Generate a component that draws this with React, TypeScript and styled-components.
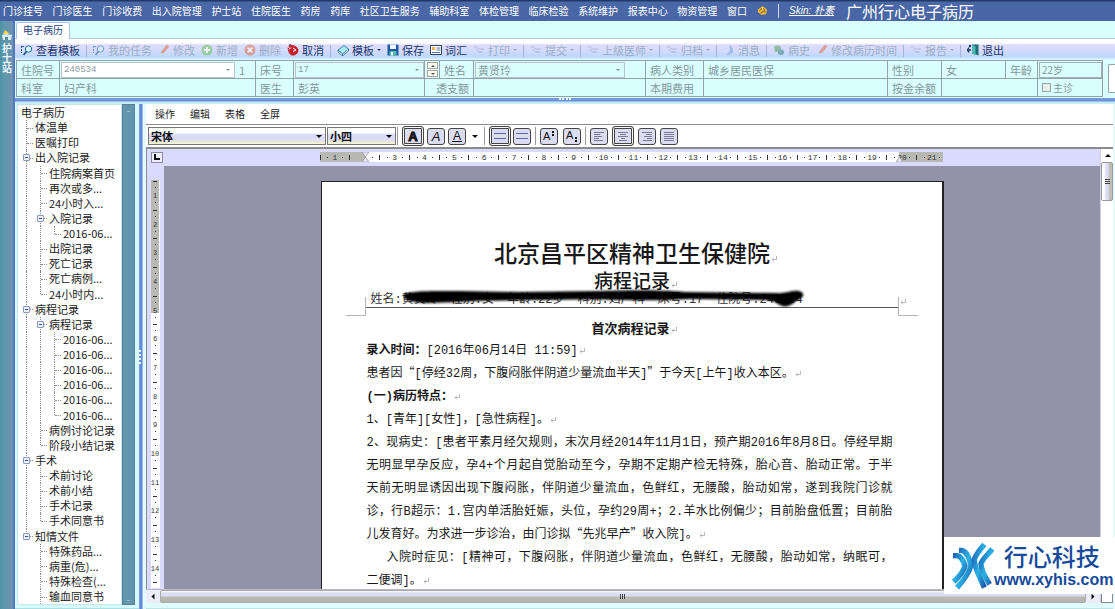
import React from "react";
import styled, { createGlobalStyle, css } from "styled-components";

const sans = `"Noto Sans CJK SC", "Noto Sans", sans-serif`;
const mono = `"Liberation Mono", "Noto Sans CJK SC", monospace`;

const GlobalStyle = createGlobalStyle`
  *, *::before, *::after { box-sizing: border-box; }
  html, body { margin: 0; padding: 0; height: 100%; }
  body { font-family: ${sans}; font-size: 11px; background: #d9fffe; overflow: hidden; }
  button, input, select { font-family: inherit; margin: 0; padding: 0; border-radius: 0; }
  button { border: 0; background: none; color: inherit; font-size: inherit; line-height: inherit; white-space: nowrap; }
`;

/* ---------- shell ---------- */

const Shell = styled.div`
  position: relative;
  height: 100vh;
  display: flex;
  flex-direction: column;
  overflow: hidden;
`;

const MenuBar = styled.header`
  flex: none;
  height: 21px;
  display: flex;
  align-items: center;
  background: linear-gradient(#1f3a68 0, #1f3a68 1px, #4a67a6 2px, #4866a5 100%);
  color: #fff;
`;

const MainNav = styled.nav`
  flex: 0 0 67%;
  padding-left: 3px;
  display: flex;
  justify-content: space-between;
`;

const MenuButton = styled.button`
  font-size: 10px;
  line-height: 18px;
`;

const SkinArea = styled.div`
  display: flex;
  align-items: center;
  padding-left: 10px;
`;

const BarDivider = styled.span`
  width: 1px;
  height: 14px;
  margin: 0 10px;
  background: #c8d4ea;
`;

const SkinLink = styled.a`
  color: #fff;
  font: italic 10px/14px "Liberation Sans", ${sans};
`;

const AppTitle = styled.h1`
  margin: 0 0 0 12px;
  font-size: 16px;
  line-height: 20px;
  font-weight: 400;
  white-space: nowrap;
`;

const Body = styled.div`
  flex: 1;
  min-height: 0;
  display: flex;
`;

const SideStrip = styled.aside`
  flex: none;
  width: 15px;
  padding-top: 8px;
  display: flex;
  flex-direction: column;
  align-items: center;
  gap: 2px;
  overflow: hidden;
  background: linear-gradient(90deg, #4a93a4 0, #5b97ad 3px, #6f93ae 12px);
  border-right: 2px solid #4f78c4;
  color: #e9f6fb;
`;

const StripButton = styled.button`
  font-size: 10px;
  line-height: 12px;
  writing-mode: vertical-rl;
  font-weight: 700;
`;

const Work = styled.div`
  flex: 1;
  min-width: 0;
  display: flex;
  flex-direction: column;
`;

const TabRow = styled.div`
  flex: none;
  height: 18px;
  padding-left: 1px;
  display: flex;
  align-items: flex-end;
  background: #d9fffe;
  border-bottom: 1px solid #b5cfe0;
`;

const Tab = styled.button`
  width: 54px;
  height: 17px;
  margin-bottom: -1px;
  padding-bottom: 2px;
  background: #fff;
  border: 1px solid #a9c4dc;
  border-bottom: 0;
  border-radius: 2px 2px 0 0;
  color: #243c78;
  font-size: 10px;
  line-height: 14px;
`;

/* ---------- command bar ---------- */

const CommandBar = styled.div`
  flex: none;
  height: 21px;
  padding-left: 3px;
  display: flex;
  align-items: center;
  background: linear-gradient(#fff 0, #fff 4px, #dcdcfb 6px, #d6dbfb 11px, #bcd8fb 18px, #e6fbff 21px);
`;

const Command = styled.button<{ $muted?: boolean }>`
  display: flex;
  align-items: center;
  gap: 3px;
  padding: 0 3px;
  line-height: 16px;
  color: ${(p) => (p.$muted ? "#9badc6" : "#22386f")};
  svg { flex: none; opacity: ${(p) => (p.$muted ? 0.55 : 1)}; }
`;

const Divider = styled.span`
  flex: none;
  width: 1px;
  height: 12px;
  margin: 2px 3px 0;
  background: #a3b4d8;
`;

const Caret = styled.span<{ $size?: number }>`
  display: inline-block;
  border: ${(p) => p.$size ?? 2}px solid transparent;
  border-top-color: currentColor;
  border-bottom-width: 0;
`;

/* ---------- patient form ---------- */

const FormRow = styled.div`
  flex: none;
  display: flex;
  background: #d9fffe;
  padding: 0 0 0 1px;
`;

const InfoTable = styled.table`
  flex: 1;
  table-layout: fixed;
  width: 100%;
  border-collapse: collapse;
  color: #86969b;
  td, th {
    height: 18px;
    padding: 0 4px;
    border: 1px solid #93a3ac;
    font-weight: 400;
    font-size: 11px;
    line-height: 16px;
    text-align: left;
    white-space: nowrap;
  }
  td.flush { padding: 0 0 0 1px; }
`;

const FieldFlex = styled.div`
  display: flex;
  align-items: center;
`;

const Combo = styled.label<{ $white?: boolean; $width?: string }>`
  flex: ${(p) => (p.$width ? `0 0 ${p.$width}` : "1")};
  position: relative;
  display: flex;
  align-items: center;
  height: 16px;
  border: 1px solid #b7c3c9;
  background: ${(p) => (p.$white ? "#fff" : "transparent")};
  &::after {
    content: "";
    position: absolute;
    right: 4px;
    border: 2px solid transparent;
    border-top-color: #7d8d94;
    border-bottom-width: 0;
  }
`;

const ComboInput = styled.input`
  width: 100%;
  border: 0;
  padding-left: 2px;
  background: transparent;
  color: #8d9a9c;
  font: 9px/14px ${mono};
  &.wide { font: 11px/14px ${sans}; }
`;

const AgeInput = styled.input`
  display: block;
  width: 100%;
  height: 16px;
  border: 1px solid #a3b0b6;
  padding-left: 2px;
  background: transparent;
  color: #8d9a9c;
  font: 10px/14px ${sans};
`;

const Suffix = styled.span`
  padding-left: 4px;
`;

const Spinner = styled.div`
  display: flex;
  flex-direction: column;
  align-items: center;
  gap: 1px;
`;

const SpinButton = styled.button<{ $up?: boolean }>`
  width: 11px;
  height: 7px;
  border: 1px solid #a9a49c;
  background: #fbf6ee;
  display: flex;
  align-items: center;
  justify-content: center;
  color: #555;
  ${Caret} { transform: ${(p) => (p.$up ? "rotate(180deg)" : "none")}; }
`;

const CheckLabel = styled.label`
  display: flex;
  align-items: center;
  gap: 2px;
  font-size: 10px;
  input {
    appearance: none;
    width: 9px;
    height: 9px;
    border: 1px solid #9aa5a8;
    background: #e6eeee;
  }
`;

const EdgeBox = styled.div`
  flex: none;
  width: 7px;
  margin: 4px 0 4px 5px;
  background: #fff;
  border: 1px solid #93a3ac;
  border-right: 0;
  border-radius: 2px 0 0 2px;
`;

const HSplitter = styled.div`
  flex: none;
  height: 7px;
  padding-top: 1px;
  display: flex;
  justify-content: center;
  background: linear-gradient(#d9fffe 0, #d9fffe 1px, #7d9ddb 1px, #6a8fd6 4px, #c3e8fb 5px, #c9f1fd 7px);
`;

const GripDots = styled.span<{ $vertical?: boolean }>`
  ${(p) =>
    p.$vertical
      ? css`width: 1px; height: 14px; border-left: 2px dotted #e8f7ff;`
      : css`width: 12px; height: 2px; border-top: 2px dotted #e8f7ff;`}
`;

/* ---------- tree ---------- */

const Content = styled.div`
  flex: 1;
  min-height: 0;
  display: flex;
`;

const TreePanel = styled.section`
  flex: none;
  width: 124px;
  padding: 0 4px 3px 2px;
  display: flex;
  background: #d5fbfd;
  border-bottom: 1px solid #a9dfe0;
`;

const TreeList = styled.ul`
  flex: 1;
  min-width: 0;
  margin: 0;
  padding: 0 0 0 2px;
  list-style: none;
  background: #fff;
  border: 1px solid #c5e6ea;
  display: flex;
  flex-direction: column;
  overflow: hidden;
`;

const TreeRow = styled.li`
  flex: 1 1 0;
  min-height: 0;
  display: flex;
  align-items: center;
  padding-left: 1px;
  color: #1b1b1b;
  font-size: 11px;
  line-height: 15px;
  white-space: nowrap;
`;

const Guide = styled.span<{ $kind: string }>`
  position: relative;
  flex: none;
  align-self: stretch;
  width: 14px;
  display: flex;
  align-items: center;
  &::before {
    content: "";
    position: absolute;
    left: 5px;
    top: 0;
    bottom: ${(p) => (p.$kind === "L" || p.$kind === "_" ? "50%" : "0")};
    border-left: ${(p) => (p.$kind === " " ? "0" : "1px dotted #8b8b8b")};
  }
  &::after {
    content: "";
    position: absolute;
    left: 6px;
    right: 2px;
    top: 50%;
    border-top: ${(p) => (p.$kind === " " || p.$kind === "I" ? "0" : "1px dotted #8b8b8b")};
  }
`;

const Expander = styled.button`
  position: relative;
  z-index: 1;
  width: 7px;
  height: 7px;
  margin-left: 2px;
  border: 1px solid #8598c4;
  border-radius: 1px;
  background: #eef1fb;
  display: flex;
  align-items: center;
  justify-content: center;
  &::before { content: ""; width: 3px; height: 1px; background: #34509c; }
`;

const TreeLabel = styled.a`
  color: inherit;
  text-decoration: none;
`;

const TreeScroll = styled.div`
  flex: none;
  width: 13px;
  border: 1px solid #5a8296;
  background: #6396ad;
  display: flex;
  flex-direction: column;
  justify-content: space-between;
  button { height: 10px; color: #a9c9d6; display: flex; align-items: center; justify-content: center; }
`;

const VSplitter = styled.div`
  flex: none;
  width: 4px;
  display: flex;
  align-items: center;
  background: linear-gradient(90deg, #9fb9e8, #5a80d2 1px, #6d93dd 3px, #c3dcf6 4px);
`;

/* ---------- editor ---------- */

const Editor = styled.section`
  flex: 1;
  min-width: 0;
  padding: 0 2px 0 3px;
  display: flex;
  flex-direction: column;
  background: #e3fbff;
`;

const EditorBox = styled.div`
  flex: 1;
  min-height: 0;
  display: flex;
  flex-direction: column;
  background: #fff;
`;

const EditorMenu = styled.nav`
  flex: none;
  height: 20px;
  padding: 0 0 2px 9px;
  display: flex;
  align-items: center;
  gap: 15px;
  font-size: 10px;
  color: #1c1c1c;
`;

const FormatBar = styled.div`
  flex: none;
  height: 25px;
  padding: 0 2px;
  display: flex;
  align-items: center;
  gap: 4px;
  border-top: 1px solid #8c8c8c;
  border-bottom: 2px solid #8c8c8c;
`;

const SelectBox = styled.span<{ $width: number }>`
  position: relative;
  flex: none;
  width: ${(p) => p.$width}px;
  height: 18px;
  margin-right: -3px;
  display: flex;
  align-items: center;
  border: 1px solid #777;
  background: linear-gradient(#fff 0, #fff 5px, #dcdcfa 6px, #dcdcfa 12px, #e9e9c8 14px, #fff 17px);
  select {
    appearance: none;
    width: 100%;
    border: 0;
    padding-left: 2px;
    background: transparent;
    font: 700 11px/16px ${sans};
    color: #111;
  }
  ${Caret} { position: absolute; right: 3px; pointer-events: none; }
`;

const FormatGroup = styled.div<{ $gap?: number }>`
  height: 18px;
  display: flex;
  align-items: center;
  gap: ${(p) => p.$gap ?? 4}px;
  padding-left: 4px;
  border-left: 1px solid #999;
`;

const FormatButton = styled.button<{ $on?: boolean }>`
  width: ${(p) => (p.$on ? 22 : 18)}px;
  height: ${(p) => (p.$on ? 20 : 17)}px;
  border: 1px solid #444;
  border-radius: 3px;
  background: #dcdcf0;
  display: flex;
  align-items: center;
  justify-content: center;
  color: #111;
  ${(p) => p.$on && css`box-shadow: inset 0 0 0 1px #f6f6f6, inset 0 0 0 2px #444;`}
`;

const BareButton = styled.button`
  padding: 0 2px 0 3px;
  color: #111;
  display: flex;
`;

const RulerRow = styled.div`
  flex: none;
  height: 17px;
  padding: 0 0 1px 4px;
  display: flex;
  align-items: center;
  background: #dadafc;
  border-left: 1px solid #8c8c8c;
`;

const TabStop = styled.button`
  width: 12px;
  height: 11px;
  border: 1px solid #8c8c9c;
  background: #ececfc;
  display: flex;
  align-items: center;
  justify-content: center;
`;

const RulerCenter = styled.div`
  flex: 1;
  display: flex;
  justify-content: center;
  svg { display: block; }
`;

const Workspace = styled.div`
  flex: 1;
  min-height: 0;
  display: flex;
`;

const Left = styled.div`
  flex: 1;
  min-width: 0;
  display: flex;
  flex-direction: column;
`;

const CanvasRow = styled.div`
  flex: 1;
  min-height: 0;
  display: flex;
`;

const VRuler = styled.div`
  flex: none;
  width: 18px;
  padding: 14px 0 0 4px;
  overflow: hidden;
  background: #dadafc;
  border-left: 1px solid #8c8c8c;
  svg { display: block; }
`;

const Canvas = styled.main`
  flex: 1;
  min-width: 0;
  padding-top: 15px;
  overflow: hidden;
  background: #9292a9;
`;

const Page = styled.article`
  width: 623px;
  min-height: 100%;
  margin: 0 auto;
  padding: 57px 44px 40px;
  background: #fff;
  border: 1px solid #222;
  border-right-width: 2px;
  color: #181818;
  font: 12px/23px ${mono};
`;

const PageHeader = styled.header`
  position: relative;
  border-bottom: 1px solid #555;
  text-align: center;
`;

const Hospital = styled.h2`
  margin: 0;
  padding-left: 9px;
  font: 500 23px/27px ${sans};
`;

const RecordTitle = styled.h3`
  margin: 0;
  padding-left: 9px;
  font: 500 19px/27px ${sans};
`;

const PatientLine = styled.p`
  position: relative;
  margin: 0;
  padding: 1px 0 0 5px;
  display: flex;
  gap: 13px;
  font: 12px/13px ${mono};
  white-space: nowrap;
  color: #333;
`;

const Scribble = styled.svg`
  position: absolute;
  left: 34px;
  top: -6px;
`;

const Crop = styled.span<{ $right?: boolean }>`
  position: absolute;
  bottom: -9px;
  width: 20px;
  height: 19px;
  display: flex;
  border-bottom: 1px solid #b5b5b5;
  ${(p) => (p.$right ? "left: 100%; border-left: 1px solid #b5b5b5;" : "right: 100%; border-right: 1px solid #b5b5b5;")}
`;

const SectionTitle = styled.h4`
  margin: 8px 0 0;
  padding-left: 6px;
  text-align: center;
  font: 700 13px/24px ${sans};
`;

const Line = styled.p<{ $full?: boolean; $indent?: boolean; $bold?: boolean }>`
  margin: 0;
  height: 23px;
  white-space: nowrap;
  padding-left: ${(p) => (p.$indent ? 20 : 0)}px;
  padding-right: ${(p) => (p.$full ? 5 : 0)}px;
  margin-left: 1px;
  text-align-last: ${(p) => (p.$full ? "justify" : "left")};
  font-weight: ${(p) => (p.$bold ? 700 : 400)};
`;

const Quote = styled.q`
  font-family: ${sans};
  line-height: 0;
  quotes: none;
`;

/* ---------- scroll bars ---------- */

const HScroll = styled.div`
  flex: none;
  height: 14px;
  display: flex;
  background: #ececfb;
  border-top: 1px solid #b9b9c4;
`;

const ScrollEnd = styled.button<{ $turn: number }>`
  flex: none;
  width: 14px;
  height: 13px;
  display: flex;
  align-items: center;
  justify-content: center;
  color: #111;
  ${Caret} { transform: rotate(${(p) => p.$turn}deg); }
`;

const HThumb = styled.div`
  flex: 1;
  display: flex;
  align-items: center;
  justify-content: center;
  border: 1px solid #aaa;
  border-radius: 2px;
  background: linear-gradient(#fff 0, #dcdcf4 2px, #dcdcf0 5px, #bcbcb4 6px, #b4b4ac 11px);
`;

const VScroll = styled.div`
  flex: none;
  width: 13px;
  display: flex;
  flex-direction: column;
  background: #fff;
  border-left: 1px solid #cfcfe8;
`;

const VThumb = styled.div`
  height: 39px;
  display: flex;
  align-items: center;
  justify-content: center;
  border: 1px solid #999;
  border-radius: 2px;
  background: linear-gradient(90deg, #fff 2px, #dcdcf4 4px, #dcdcf0 6px, #bcbcac 8px, #c4c4bc);
`;

const ThumbGrip = styled.span<{ $vertical?: boolean }>`
  width: ${(p) => (p.$vertical ? 5 : 6)}px;
  height: ${(p) => (p.$vertical ? 6 : 5)}px;
  background: repeating-linear-gradient(${(p) => (p.$vertical ? "180deg" : "90deg")}, #444 0 1px, transparent 1px 2px);
`;

const Corner = styled.span`
  flex: none;
  height: 13px;
  background: #fff;
  border: 1px solid #888;
  margin-top: auto;
`;

const BottomBand = styled.div`
  flex: none;
  height: 6px;
  background: #e0fbfd;
  border-bottom: 1px solid #bfe6e6;
`;

const Brand = styled.a`
  position: absolute;
  right: 0;
  bottom: 15px;
  width: 171px;
  height: 57px;
  padding-left: 7px;
  display: flex;
  align-items: center;
  background: #fff;
  color: #164b9c;
  text-decoration: none;
`;

const BrandText = styled.span`
  flex: none;
  display: flex;
  flex-direction: column;
  align-items: center;
  strong { padding-right: 4px; font: 500 24px/28px ${sans}; }
  b { font: 700 16px/20px "Liberation Sans", sans-serif; }
`;

/* ---------- icons ---------- */

type IconName = "find" | "pen" | "add" | "del" | "cancel" | "tpl" | "save" | "words" | "hand" | "msg" | "chat" | "exit" | "flower" | "home";

const iconArt: Record<IconName, React.ReactNode> = {
  find: (
    <g fill="none" stroke="#2a5b9e">
      <path d="M0.5 2v7M1 2.5h2" strokeDasharray="2 1" />
      <circle cx="7.5" cy="5" r="3.2" fill="#d8f4fb" stroke="#1d6f9e" />
      <path d="M5.4 7.5L2.6 11" stroke="#204a86" strokeWidth="1.6" />
    </g>
  ),
  pen: <path d="M3 9l1-2 5-6 2 1.5-5 6z" fill="#e5703a" stroke="#b8502b" strokeWidth=".5" />,
  add: (
    <g>
      <circle cx="6" cy="6" r="5.5" fill="#6fc25a" />
      <path d="M6 3v6M3 6h6" stroke="#fff" strokeWidth="2" />
    </g>
  ),
  del: (
    <g>
      <circle cx="6" cy="6" r="5.5" fill="#d9744d" />
      <path d="M3.7 3.7l4.6 4.6M8.3 3.7L3.7 8.3" stroke="#fff" strokeWidth="1.8" />
    </g>
  ),
  cancel: (
    <g>
      <path d="M1 2c3-2 9-1 10.500 4 0 4-4 6-7 5.500C2 10 0 6 1 2z" fill="#c9202c" />
      <path d="M0.500 1.500l2 3M6 4l3 2-3 1.500M4 3.500l-2 2" stroke="#fff" fill="none" />
      <path d="M2 1l2-.5" stroke="#2c3f8f" />
    </g>
  ),
  tpl: (
    <g stroke="#2b6c9c" strokeWidth=".8">
      <path d="M1 6l6-4.500 4.500 3.500-6 5z" fill="#a6ebf0" />
      <path d="M1 6v2l4.500 4v-2zM5.500 12l6-5V5" fill="#e8fbff" />
    </g>
  ),
  save: (
    <g>
      <path d="M0.500.5h10l1 1v10h-11z" fill="#2056a8" />
      <path d="M3 .5h6v4.500H3z" fill="#eef6ff" />
      <path d="M2.500 7h7v4.500h-7z" fill="#4cc0a4" />
      <path d="M4 8h2v3.500H4z" fill="#fff" />
    </g>
  ),
  words: (
    <g>
      <path d="M.5 1.500h11v9H.5z" fill="#fff" stroke="#34435f" />
      <path d="M2 3h3v3H2z" fill="#e8b14a" />
      <path d="M6.500 4h4M6.500 6h4M2 8.500h8" stroke="#5a6ca8" />
    </g>
  ),
  hand: (
    <g fill="none" stroke="#8b9cc4">
      <path d="M1 3c2-1 3 1 5 2h5M6 8h4M3 5c1 2 3 4 5 3" />
    </g>
  ),
  msg: <path d="M6 1c5 1 6 9-1 10l-3-1c5 0 6-5 4-9z" fill="#7fa0dc" />,
  chat: (
    <g>
      <path d="M1 3c3-3 8-1 7 2s-5 3-6 3z" fill="#5ba45c" />
      <path d="M5 6c3-2 7 0 6 3s-5 2-6 1z" fill="#3f8a82" />
    </g>
  ),
  exit: (
    <g>
      <path d="M5 .5h6.500v11l-4-1.500H5z" fill="#1c6f74" />
      <path d="M5 .5l3.500 2v9l-3.500-2z" fill="#53b9b6" />
      <path d="M0 6h4M2 3.500L.5 6 2 8.500" stroke="#163a5c" strokeWidth="1.300" fill="none" />
      <circle cx="3" cy="2" r="1.200" fill="#163a5c" />
    </g>
  ),
  flower: (
    <g>
      <path d="M1 5l5-4 5 4-1 5-5 1-4-3z" fill="#e2b23c" />
      <path d="M3 6l3-3 2 2M4 9l4-3 1 2" stroke="#7c5a1e" fill="none" />
      <path d="M5 2l2 1-1 2z" fill="#fff4c2" />
    </g>
  ),
  home: (
    <g>
      <path d="M4 1l4 3-2 2-4-1z" fill="#f2d45c" />
      <path d="M1 6l4-1 6 1-1 5H2z" fill="#d8ecf0" />
      <path d="M4 8h3v3H4z" fill="#4f8d9d" />
    </g>
  ),
};

const Icon = ({ name, size = 12 }: { name: IconName; size?: number }) => (
  <svg width={size} height={size} viewBox="0 0 12 12" aria-hidden="true">
    {iconArt[name]}
  </svg>
);

const ReturnMark = () => (
  <svg width="8" height="8" viewBox="0 0 8 8" aria-hidden="true">
    <path d="M6.500 2v3.500H2M3.800 3.800L2 5.500l1.800 1.700" fill="none" stroke="#a5a5a5" strokeWidth=".8" />
  </svg>
);

const bars: Record<string, [number, number][]> = {
  left: [[1, 11], [1, 7], [1, 9], [1, 6], [1, 10]],
  center: [[1, 11], [3, 9], [1, 11], [4, 8], [2, 10]],
  right: [[1, 11], [5, 11], [3, 11], [6, 11], [2, 11]],
  full: [[1, 11], [1, 11], [1, 11], [1, 11], [1, 11]],
  two: [[0, 12], [0, 12]],
};

const Bars = ({ kind }: { kind: string }) => {
  const two = kind === "two";
  const size = two ? 12 : 13;
  return (
    <svg width="12" height={size} viewBox={`0 0 12 ${size}`} shapeRendering="crispEdges" aria-hidden="true">
      {bars[kind].map(([a, b], i) => (
        <rect key={i} x={a} y={two ? i * 5 + 3 : i * 2 + 2} width={b - a} height="1" fill={two ? "#5a68b0" : "#7a7a94"} />
      ))}
    </svg>
  );
};

const Letter = ({ kind }: { kind: "bold" | "italic" | "under" | "sup" | "sub" }) => (
  <svg width="14" height="14" viewBox="0 0 14 14" fontFamily="Liberation Sans, sans-serif" fill="#111" aria-hidden="true">
    {kind === "bold" && <text x="7" y="12" fontSize="13" fontWeight="700" stroke="#111" textAnchor="middle">A</text>}
    {kind === "italic" && <text x="7" y="12" fontSize="13" fontStyle="italic" textAnchor="middle">A</text>}
    {kind === "under" && (
      <>
        <text x="7" y="11" fontSize="12" textAnchor="middle">A</text>
        <path d="M2 12h10v1H2z" />
      </>
    )}
    {kind === "sup" && (
      <>
        <text x="1" y="11" fontSize="11">A</text>
        <path d="M10 2h2v2h-2zM10 5h2v2h-2z" />
      </>
    )}
    {kind === "sub" && (
      <>
        <text x="1" y="10" fontSize="11">A</text>
        <path d="M10 8h2v2h-2zM10 11h2v2h-2z" />
      </>
    )}
  </svg>
);

/* Horizontal ruler: 30px to the centimetre, text area between the two grey margins. */
const HRuler = () => {
  const cm = 29.84;
  const at = (n: number) => 15 + (n - 1) * cm;
  const nums = Array.from({ length: 20 }, (_, i) => i + 2);
  return (
    <svg width="623" height="10" viewBox="0 0 623 10" fontFamily="Liberation Mono, monospace" fontSize="8" fill="#333" shapeRendering="crispEdges" aria-hidden="true">
      <rect width="623" height="10" fill="#fff" />
      <rect width="46" height="10" fill="#b9b9b4" />
      <rect x="579" width="44" height="10" fill="#b9b9b4" />
      <text x={at(1)} y="8" textAnchor="middle">1</text>
      {[1, ...nums].map((n) => {
        const x = at(n);
        return (
          <g key={n}>
            {n > 2 && <text x={x} y="8" textAnchor="middle">{n}</text>}
            {n !== 2 && <rect x={x - 8} y="5" width="1" height="1" />}
            <rect x={x + 7} y="5" width="1" height="1" />
            {n < 21 && <rect x={x + 14} y="3" width="1" height="5" />}
          </g>
        );
      })}
      <rect x="0" y="3" width="1" height="5" />
      <path d="M42 0h7l-3.500 5zM42 10h7l-3.500-5z" fill="#e6e6f4" stroke="#888" strokeWidth=".6" shapeRendering="auto" />
      <path d="M576 10h7l-3.500-5z" fill="#e6e6f4" stroke="#888" strokeWidth=".6" shapeRendering="auto" />
    </svg>
  );
};

const VerticalRuler = () => {
  const cm = 28.67;
  const nums = Array.from({ length: 14 }, (_, i) => i + 1);
  return (
    <svg width="9" height="408" viewBox="0 0 9 408" fontFamily="Liberation Mono, monospace" fontSize="7" fill="#333" shapeRendering="crispEdges" aria-hidden="true">
      <rect width="9" height="408" fill="#fff" />
      <rect width="8" height="133" fill="#b9b9b4" />
      {nums.map((n) => {
        const y = 15 + (n - 1) * cm;
        return (
          <g key={n}>
            <text x="4" y={y + 3} textAnchor="middle">{n}</text>
            <rect x="2" y={y - 14} width="4" height="1" />
            <rect x="4" y={y - 8} width="1" height="1" />
            <rect x="4" y={y + 7} width="1" height="1" />
          </g>
        );
      })}
      <rect x="2" y="402" width="4" height="1" />
    </svg>
  );
};

/* ---------- data ---------- */

const menuItems = [
  "门诊挂号", "门诊医生", "门诊收费", "出入院管理", "护士站", "住院医生", "药房", "药库",
  "社区卫生服务", "辅助科室", "体检管理", "临床检验", "系统维护", "报表中心", "物资管理", "窗口",
];

type Cmd = { label: string; icon: IconName; muted?: boolean; drop?: boolean } | "|";

const commands: Cmd[] = [
  { label: "查看模板", icon: "find" }, "|",
  { label: "我的任务", icon: "find", muted: true },
  { label: "修改", icon: "pen", muted: true },
  { label: "新增", icon: "add", muted: true },
  { label: "删除", icon: "del", muted: true },
  { label: "取消", icon: "cancel" }, "|",
  { label: "模板", icon: "tpl", drop: true },
  { label: "保存", icon: "save" },
  { label: "词汇", icon: "words" },
  { label: "打印", icon: "hand", muted: true, drop: true }, "|",
  { label: "提交", icon: "hand", muted: true, drop: true }, "|",
  { label: "上级医师", icon: "hand", muted: true, drop: true }, "|",
  { label: "归档", icon: "hand", muted: true, drop: true }, "|",
  { label: "消息", icon: "msg", muted: true }, "|",
  { label: "病史", icon: "chat", muted: true },
  { label: "修改病历时间", icon: "pen", muted: true }, "|",
  { label: "报告", icon: "hand", muted: true, drop: true }, "|",
  { label: "退出", icon: "exit" },
];

/* Guide codes: T branch, L last branch, I pass-through, + open node, _ last open node. */
const tree: [string, string][] = [
  ["", "电子病历"],
  ["T", "体温单"],
  ["T", "医嘱打印"],
  ["+", "出入院记录"],
  ["IT", "住院病案首页"],
  ["IT", "再次或多..."],
  ["IT", "24小时入..."],
  ["I+", "入院记录"],
  ["IIL", "2016-06..."],
  ["IT", "出院记录"],
  ["IT", "死亡记录"],
  ["IT", "死亡病例..."],
  ["IL", "24小时内..."],
  ["+", "病程记录"],
  ["I+", "病程记录"],
  ["IIT", "2016-06..."],
  ["IIT", "2016-06..."],
  ["IIT", "2016-06..."],
  ["IIT", "2016-06..."],
  ["IIT", "2016-06..."],
  ["IIL", "2016-06..."],
  ["IT", "病例讨论记录"],
  ["IL", "阶段小结记录"],
  ["+", "手术"],
  ["IT", "术前讨论"],
  ["IT", "术前小结"],
  ["IT", "手术记录"],
  ["IL", "手术同意书"],
  ["_", "知情文件"],
  [" T", "特殊药品..."],
  [" T", "病重(危)..."],
  [" T", "特殊检查(..."],
  [" T", "输血同意书"],
];

const columns = [43, 196, 38, 131, 15, 34, 172, 58, 0, 54, 64, 32, 65];

/* ---------- sections ---------- */

const PatientForm = () => (
  <FormRow>
    <InfoTable>
      <colgroup>
        {columns.map((w, i) => (
          <col key={i} style={w ? { width: w } : undefined} />
        ))}
      </colgroup>
      <tbody>
        <tr>
          <th scope="row">住院号</th>
          <td className="flush">
            <FieldFlex>
              <Combo $white $width="174px"><ComboInput aria-label="住院号" defaultValue="240534" /></Combo>
              <Suffix>1</Suffix>
            </FieldFlex>
          </td>
          <th scope="row">床号</th>
          <td className="flush"><Combo><ComboInput aria-label="床号" defaultValue="17" /></Combo></td>
          <td className="flush">
            <Spinner>
              <SpinButton $up aria-label="上一个"><Caret /></SpinButton>
              <SpinButton aria-label="下一个"><Caret /></SpinButton>
            </Spinner>
          </td>
          <th scope="row">姓名</th>
          <td className="flush">
            <FieldFlex>
              <Combo $width="150px"><ComboInput className="wide" aria-label="姓名" defaultValue="黄贤玲" /></Combo>
            </FieldFlex>
          </td>
          <th scope="row">病人类别</th>
          <td>城乡居民医保</td>
          <th scope="row">性别</th>
          <td>女</td>
          <th scope="row">年龄</th>
          <td className="flush"><AgeInput aria-label="年龄" defaultValue="22岁" /></td>
        </tr>
        <tr>
          <th scope="row">科室</th>
          <td>妇产科</td>
          <th scope="row">医生</th>
          <td>彭英</td>
          <th scope="row" colSpan={2} style={{ textAlign: "right" }}>透支额</th>
          <td />
          <th scope="row">本期费用</th>
          <td />
          <th scope="row">按金余额</th>
          <td colSpan={2} />
          <td><CheckLabel><input type="checkbox" />主诊</CheckLabel></td>
        </tr>
      </tbody>
    </InfoTable>
    <EdgeBox />
  </FormRow>
);

const RecordTree = () => (
  <TreePanel>
    <TreeList>
      {tree.map(([guides, label], i) => (
        <TreeRow key={i}>
          {guides.split("").map((g, j) => (
            <Guide key={j} $kind={g}>
              {(g === "+" || g === "_") && <Expander aria-label={`折叠${label}`} />}
            </Guide>
          ))}
          <TreeLabel href="#">{label}</TreeLabel>
        </TreeRow>
      ))}
    </TreeList>
    <TreeScroll>
      <button aria-label="向上">-</button>
      <button aria-label="向下">-</button>
    </TreeScroll>
  </TreePanel>
);

const FormatTools = () => (
  <FormatBar>
    <SelectBox $width={178}>
      <select aria-label="字体" defaultValue="宋体"><option>宋体</option></select>
      <Caret $size={3} />
    </SelectBox>
    <SelectBox $width={69}>
      <select aria-label="字号" defaultValue="小四"><option>小四</option></select>
      <Caret $size={3} />
    </SelectBox>
    <FormatGroup $gap={3}>
      <FormatButton $on aria-label="加粗"><Letter kind="bold" /></FormatButton>
      <FormatButton aria-label="斜体"><Letter kind="italic" /></FormatButton>
      <FormatButton aria-label="下划线"><Letter kind="under" /></FormatButton>
      <BareButton aria-label="更多"><Caret $size={3} /></BareButton>
    </FormatGroup>
    <FormatGroup $gap={2}>
      <FormatButton $on aria-label="单倍行距"><Bars kind="two" /></FormatButton>
      <FormatButton aria-label="双倍行距"><Bars kind="two" /></FormatButton>
    </FormatGroup>
    <FormatGroup $gap={5}>
      <FormatButton aria-label="上标"><Letter kind="sup" /></FormatButton>
      <FormatButton aria-label="下标"><Letter kind="sub" /></FormatButton>
    </FormatGroup>
    <FormatGroup>
      <FormatButton aria-label="左对齐"><Bars kind="left" /></FormatButton>
      <FormatButton $on aria-label="居中"><Bars kind="center" /></FormatButton>
      <FormatButton aria-label="右对齐"><Bars kind="right" /></FormatButton>
      <FormatButton aria-label="两端对齐"><Bars kind="full" /></FormatButton>
    </FormatGroup>
  </FormatBar>
);

const RecordPage = () => (
  <Page lang="zh-CN">
    <PageHeader>
      <Hospital>北京昌平区精神卫生保健院<ReturnMark /></Hospital>
      <RecordTitle>病程记录<ReturnMark /></RecordTitle>
      <PatientLine>
        <span>姓名:黄贤玲</span>
        <span>性别:女</span>
        <span>年龄:22岁</span>
        <span>科别:妇产科</span>
        <span>床号:17</span>
        <span>住院号:240534</span>
        <Scribble width="408" height="24" viewBox="0 0 408 24" aria-hidden="true">
          <defs>
            <filter id="soft" x="-5%" y="-30%" width="110%" height="160%"><feGaussianBlur stdDeviation="1" /></filter>
          </defs>
          <path
            filter="url(#soft)"
            d="M3 8C8 3 40 4 60 4L120 5L200 4C240 3 260 3 285 5L375 6C385 7 392 3 399 4C406 6 404 11 396 14C390 20 384 21 378 17C374 14 370 13 364 13L290 12C262 14 240 13 215 13C190 12 160 13 130 13C100 14 80 13 60 15L30 16C16 16 4 14 3 8Z"
            fill="#000"
          />
        </Scribble>
      </PatientLine>
      <Crop />
      <Crop $right><ReturnMark /></Crop>
    </PageHeader>
    <SectionTitle>首次病程记录<ReturnMark /></SectionTitle>
    <Line><b>录入时间：</b>[2016年06月14日 11:59]<ReturnMark /></Line>
    <Line>患者因<Quote>“</Quote>[停经32周，下腹闷胀伴阴道少量流血半天]<Quote>”</Quote>于今天[上午]收入本区。<ReturnMark /></Line>
    <Line $bold>(一)病历特点：<ReturnMark /></Line>
    <Line>1、[青年][女性]，[急性病程]。<ReturnMark /></Line>
    <Line $full>2、现病史：[患者平素月经欠规则，末次月经2014年11月1日，预产期2016年8月8日。停经早期</Line>
    <Line $full>无明显早孕反应，孕4+个月起自觉胎动至今，孕期不定期产检无特殊，胎心音、胎动正常。于半</Line>
    <Line $full>天前无明显诱因出现下腹闷胀，伴阴道少量流血，色鲜红，无腰酸，胎动如常，遂到我院门诊就</Line>
    <Line $full>诊，行B超示：1.宫内单活胎妊娠，头位，孕约29周+；2.羊水比例偏少；目前胎盘低置；目前胎</Line>
    <Line>儿发育好。为求进一步诊治，由门诊拟<Quote>“</Quote>先兆早产<Quote>”</Quote>收入院]。<ReturnMark /></Line>
    <Line $full $indent>入院时症见：[精神可，下腹闷胀，伴阴道少量流血，色鲜红，无腰酸，胎动如常，纳眠可，</Line>
    <Line>二便调]。<ReturnMark /></Line>
  </Page>
);

const BrandMark = () => (
  <svg width="43" height="50" viewBox="0 0 129 150" aria-hidden="true">
    <defs>
      <linearGradient id="brand" x1="0" y1="0" x2="1" y2="1">
        <stop offset="0" stopColor="#1d62b4" />
        <stop offset=".5" stopColor="#2bb3e6" />
        <stop offset="1" stopColor="#1c58ac" />
      </linearGradient>
    </defs>
    <g fill="none" stroke="url(#brand)" strokeWidth="16">
      <path d="M6 44H16C30 44 36 58 42 74C38 92 26 106 8 122" />
      <path d="M24 28H32C48 30 54 50 60 74C54 96 40 116 18 140" />
      <path d="M100 10C88 26 74 40 70 56C70 78 84 104 100 140" />
      <path d="M124 24C110 42 94 54 90 68C90 86 102 108 116 130" />
    </g>
  </svg>
);

export default function App() {
  return (
    <Shell lang="zh-CN">
      <GlobalStyle />
      <MenuBar>
        <MainNav>
          {menuItems.map((m) => (
            <MenuButton key={m}>{m}</MenuButton>
          ))}
        </MainNav>
        <SkinArea>
          <Icon name="flower" size={11} />
          <BarDivider />
          <SkinLink href="#">Skin: 朴素</SkinLink>
        </SkinArea>
        <AppTitle>广州行心电子病历</AppTitle>
      </MenuBar>
      <Body>
        <SideStrip>
          <Icon name="home" />
          <StripButton>护士站</StripButton>
        </SideStrip>
        <Work>
          <TabRow><Tab>电子病历</Tab></TabRow>
          <CommandBar>
            {commands.map((c, i) =>
              c === "|" ? (
                <Divider key={i} />
              ) : (
                <Command key={i} $muted={c.muted}>
                  <Icon name={c.icon} />
                  {c.label}
                  {c.drop && <Caret />}
                </Command>
              )
            )}
          </CommandBar>
          <PatientForm />
          <HSplitter><GripDots /></HSplitter>
          <Content>
            <RecordTree />
            <VSplitter><GripDots $vertical /></VSplitter>
            <Editor>
              <EditorBox>
                <EditorMenu>
                  <button>操作</button>
                  <button>编辑</button>
                  <button>表格</button>
                  <button>全屏</button>
                </EditorMenu>
                <FormatTools />
                <Workspace>
                  <Left>
                    <RulerRow>
                      <TabStop aria-label="制表位">
                        <svg width="6" height="6" viewBox="0 0 6 6" aria-hidden="true"><path d="M1 0v5h5" fill="none" stroke="#111" strokeWidth="2" /></svg>
                      </TabStop>
                      <RulerCenter><HRuler /></RulerCenter>
                    </RulerRow>
                    <CanvasRow>
                      <VRuler><VerticalRuler /></VRuler>
                      <Canvas><RecordPage /></Canvas>
                    </CanvasRow>
                    <HScroll>
                      <ScrollEnd $turn={90} aria-label="向左"><Caret $size={3} /></ScrollEnd>
                      <HThumb><ThumbGrip /></HThumb>
                      <ScrollEnd $turn={-90} aria-label="向右"><Caret $size={3} /></ScrollEnd>
                    </HScroll>
                  </Left>
                  <VScroll>
                    <ScrollEnd $turn={180} aria-label="向上"><Caret $size={3} /></ScrollEnd>
                    <VThumb><ThumbGrip $vertical /></VThumb>
                    <Corner />
                  </VScroll>
                </Workspace>
              </EditorBox>
              <BottomBand />
            </Editor>
          </Content>
        </Work>
      </Body>
      <Brand href="#">
        <BrandMark />
        <BrandText>
          <strong>行心科技</strong>
          <b>www.xyhis.com</b>
        </BrandText>
      </Brand>
    </Shell>
  );
}
